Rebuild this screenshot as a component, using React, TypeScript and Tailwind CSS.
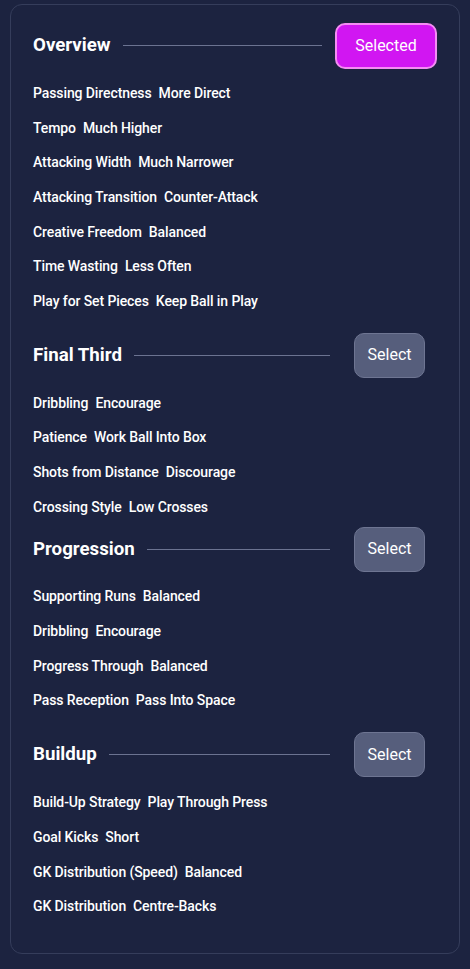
import React from "react";

interface Item {
  label: string;
  value: string;
}

interface Section {
  title: string;
  selected?: boolean;
  items: Item[];
  gapTop: string;
}

const sections: Section[] = [
  {
    title: "Overview",
    selected: true,
    gapTop: "mt-0",
    items: [
      { label: "Passing Directness", value: "More Direct" },
      { label: "Tempo", value: "Much Higher" },
      { label: "Attacking Width", value: "Much Narrower" },
      { label: "Attacking Transition", value: "Counter-Attack" },
      { label: "Creative Freedom", value: "Balanced" },
      { label: "Time Wasting", value: "Less Often" },
      { label: "Play for Set Pieces", value: "Keep Ball in Play" },
    ],
  },
  {
    title: "Final Third",
    gapTop: "mt-[14px]",
    items: [
      { label: "Dribbling", value: "Encourage" },
      { label: "Patience", value: "Work Ball Into Box" },
      { label: "Shots from Distance", value: "Discourage" },
      { label: "Crossing Style", value: "Low Crosses" },
    ],
  },
  {
    title: "Progression",
    gapTop: "mt-[2px]",
    items: [
      { label: "Supporting Runs", value: "Balanced" },
      { label: "Dribbling", value: "Encourage" },
      { label: "Progress Through", value: "Balanced" },
      { label: "Pass Reception", value: "Pass Into Space" },
    ],
  },
  {
    title: "Buildup",
    gapTop: "mt-[14px]",
    items: [
      { label: "Build-Up Strategy", value: "Play Through Press" },
      { label: "Goal Kicks", value: "Short" },
      { label: "GK Distribution (Speed)", value: "Balanced" },
      { label: "GK Distribution", value: "Centre-Backs" },
    ],
  },
];

function SectionBlock({ section }: { section: Section }) {
  return (
    <div className={section.gapTop}>
      <div className="flex h-[45px] items-center">
        <h2 className="text-[18.7px] font-bold leading-none text-white">
          {section.title}
        </h2>
        <div className="ml-3 h-px flex-1 bg-[#6b7391]" />
        {section.selected ? (
          <button className="ml-[13px] h-[46px] w-[102px] rounded-[10px] border-2 border-[#f48cf3] bg-[#d116f2] text-[16px] text-white">
            Selected
          </button>
        ) : (
          <button className="ml-6 mr-3 h-[45px] w-[71px] rounded-[10px] border border-[#6e7592] bg-[#565e7c] text-[16px] text-white">
            Select
          </button>
        )}
      </div>
      <ul className="mt-2">
        {section.items.map((item, i) => (
          <li
            key={i}
            className="flex h-[34.7px] items-center text-[14px] font-medium tracking-[-0.1px] text-white"
          >
            <span>{item.label}</span>
            <span className="ml-[7px]">{item.value}</span>
          </li>
        ))}
      </ul>
    </div>
  );
}

export default function App() {
  return (
    <div
      className="min-h-[969px] bg-[#1c2340] pt-[4px]"
      style={{ fontFamily: "Roboto, 'Liberation Sans', sans-serif" }}
    >
      <div className="mx-[10px] rounded-xl border border-[#353d5b] px-[22px] pt-[18px] pb-[29px]">
        {sections.map((s) => (
          <SectionBlock key={s.title} section={s} />
        ))}
      </div>
    </div>
  );
}
